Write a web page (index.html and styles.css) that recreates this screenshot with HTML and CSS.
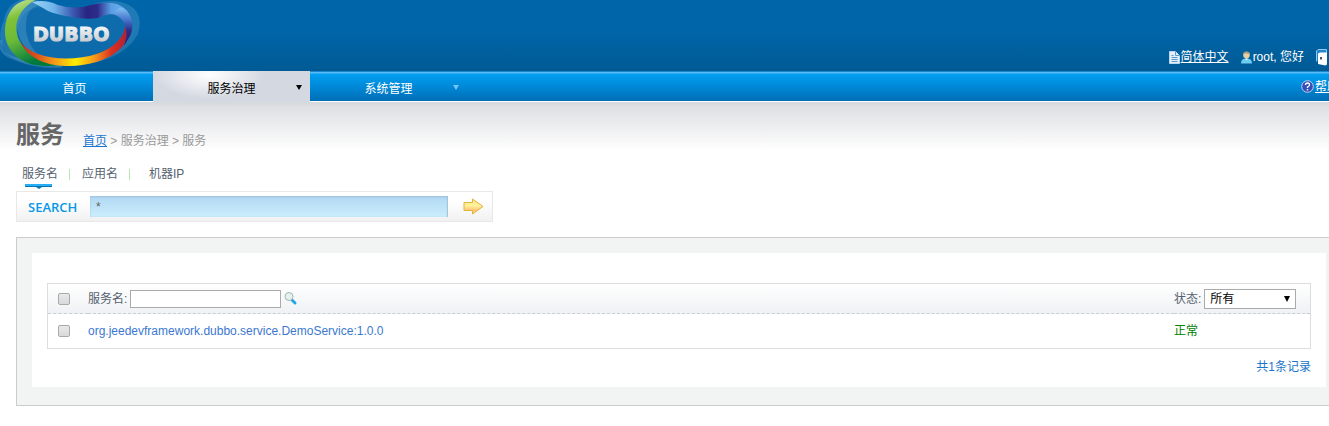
FILE: index.html
```html
<!DOCTYPE html>
<html lang="zh-CN">
<head>
<meta charset="utf-8">
<title>Dubbo 服务治理</title>
<link rel="stylesheet" href="styles.css">
</head>
<body>
<div class="page">
  <header class="header">
    <svg class="logo" width="142" height="71" viewBox="0 0 142 71" role="img" aria-label="DUBBO">
      <defs>
        <linearGradient id="green" x1="0" y1="0" x2=".35" y2="1">
          <stop offset="0" stop-color="#d6ecc4"/><stop offset=".3" stop-color="#80c238"/><stop offset=".6" stop-color="#6cba38"/><stop offset="1" stop-color="#007a3d"/>
        </linearGradient>
        <linearGradient id="top" x1="0" y1="0" x2="1" y2="0">
          <stop offset="0" stop-color="#9ad4f5"/><stop offset=".22" stop-color="#6fb4ea"/><stop offset=".42" stop-color="#3a56b0"/><stop offset=".55" stop-color="#2a2580"/><stop offset=".66" stop-color="#2c2c88"/><stop offset=".8" stop-color="#5a9fe4"/><stop offset="1" stop-color="#79baf2"/>
        </linearGradient>
        <linearGradient id="bottom" x1="0" y1="0" x2="1" y2="0">
          <stop offset="0" stop-color="#b83024"/><stop offset=".15" stop-color="#d8501c"/><stop offset=".3" stop-color="#f2901a"/><stop offset=".52" stop-color="#ffee00"/><stop offset=".7" stop-color="#f5981c"/><stop offset=".86" stop-color="#d9301e"/><stop offset="1" stop-color="#b02038"/>
        </linearGradient>
        <linearGradient id="side" x1="0" y1="0" x2="0" y2="1">
          <stop offset="0" stop-color="#7dbdf4"/><stop offset=".35" stop-color="#3f6cc4"/><stop offset=".6" stop-color="#2a2c86"/><stop offset="1" stop-color="#33206e"/>
        </linearGradient>
        <linearGradient id="word" x1="0" y1="0" x2="0" y2="1">
          <stop offset="0" stop-color="#ffffff"/><stop offset="1" stop-color="#bfc2c8"/>
        </linearGradient>
      </defs>
      <path d="M4 20Q-5 40 7 54Q26 68 60 66Q120 66 138 34Q146 6 116 1Q98 0 86 8Q55 26 38 0H20Q6 6 4 20Z" fill="#8cc4e4" fill-opacity=".22"/>
      <path d="M1 40Q-2 54 16 59Q38 68 62 66" fill="none" stroke="#7ab5dc" stroke-opacity=".3" stroke-width="3"/>
      <path d="M17 30Q22 3 50 8Q80 22 108 12Q124 12 126 28Q124 50 100 56Q50 64 26 49Q17 42 17 30Z" fill="#0767a9" fill-opacity=".7"/>
      <path d="M27 0Q17 12 17 28Q20 44 30 52L38 55Q22 38 27 16Q31 6 42 4Z" fill="#62a6d2" fill-opacity=".35"/>
      <path d="M33 -1C14 0 5 14 5 32C5 50 20 66 46 66Q54 66 60 65C40 62 24 52 18 38C13 22 20 8 37 -1Z" fill="url(#green)"/>
      <path d="M32 2Q46 -1 58 5Q76 10 91 5Q106 1 117 4Q129 9 131 20Q124 13 114 14Q106 14 98 18Q84 20 66 16Q55 14 48 11Q40 6 32 2Z" fill="url(#top)"/>
      <path d="M112 14Q121 4 127 11Q136 22 130 36L124 46Q127 34 125 26Q122 16 112 14Z" fill="url(#side)"/>
      <path d="M20 42Q34 58 66 58.500Q101 58 117 42Q125 34 125 26Q129 36 123 46C112 58 94 66 66 66Q32 65 20 42Z" fill="url(#bottom)"/>
      <text class="logo-word" x="33" y="41" fill="url(#word)" stroke="url(#word)">DUBBO</text>
    </svg>
    <div class="userbar">
      <a class="user-item linked" href="#">
        <svg width="11" height="13" viewBox="0 0 11 13"><path d="M.5.5h6l4 4v8H.5z" fill="#e4f1fb" stroke="#b9d7ee"/><path d="M6.500.5v4h4" fill="none" stroke="#5c99c8"/><path d="M2.500 4.500h2M2.500 6.500h6M2.500 8.500h6M2.500 10.500h6" stroke="#5a95c6"/></svg>
        <span>简体中文</span></a>
      <span class="user-item">
        <svg width="11" height="13" viewBox="0 0 11 13"><path d="M0 12.500Q0 8 4 7.500H7Q11 8 11 12.500Z" fill="#6ccdf0"/><circle cx="5.500" cy="4" r="3.300" fill="#e8d0a4"/><path d="M2.200 4Q2 .5 5.500.5T8.800 4L7 2.500H4Z" fill="#a89c80"/><path d="M4 7.500l1.500 2L7 7.500z" fill="#fff"/></svg>
        <span>root, 您好</span></span>
      <a class="user-item linked" href="#">
        <svg width="12" height="17" viewBox="0 0 12 17"><path d="M.5 12.500V2L2 .5H10.500V4" fill="#1f86cf" stroke="#8fcaf4"/><path d="M2 4.500L4 3.500H11V15.500L9.500 16.500L2 15Z" fill="#fff"/><path d="M4 8h2v2.500h-2z" fill="#3f5368"/></svg>
        <span>退出</span></a>
    </div>
  </header>

  <nav class="nav">
    <a class="tab home" href="#">首页</a>
    <a class="tab active" href="#">服务治理<i class="caret"></i></a>
    <a class="tab" href="#">系统管理<i class="caret"></i></a>
    <a class="help" href="#">
      <svg width="13" height="13" viewBox="0 0 13 13"><circle cx="6.500" cy="6.500" r="5.800" fill="#3450b8" stroke="#c4cdf0"/><path d="M4.500 5Q4.500 3 6.500 3T8.500 5Q8.500 6 6.500 7V8" fill="none" stroke="#fff" stroke-width="1.300"/><path d="M5.800 9h1.400v1.400H5.800z" fill="#fff"/></svg>
      <span>帮助</span></a>
  </nav>

  <main class="content">
    <div class="heading">
      <h1>服务</h1>
      <div class="crumbs"><a href="#">首页</a> &gt; 服务治理 &gt; 服务</div>
    </div>
    <div class="kinds">
      <a class="kind current" href="#">服务名</a>
      <a class="kind" href="#">应用名</a>
      <a class="kind" href="#">机器IP</a>
    </div>
    <form class="search">
      <label for="keyword">SEARCH</label>
      <input id="keyword" class="keyword" type="text" value="*">
      <button class="go" type="button" aria-label="搜索">
        <svg width="21" height="17" viewBox="0 0 21 17"><defs><linearGradient id="gold" x1="0" y1="0" x2="0" y2="1"><stop offset="0" stop-color="#ffe98a"/><stop offset=".45" stop-color="#fff19a"/><stop offset=".75" stop-color="#ffc37a"/><stop offset="1" stop-color="#ffe070"/></linearGradient></defs><path d="M1 4.500H9.500V1L20 8.500L9.500 16V12.500H1Z" fill="url(#gold)" stroke="#e0b43c" stroke-linejoin="round"/></svg>
      </button>
    </form>

    <section class="panel">
      <div class="sheet">
        <table class="services">
          <thead>
            <tr>
              <th class="pick"><input class="check" type="checkbox" aria-label="全选"></th>
              <th>
                <div class="filter">
                  <label for="name">服务名:</label>
                  <input id="name" class="name" type="text">
                  <svg width="14" height="14" viewBox="0 0 14 14"><path d="M8 8l3 3" stroke="#25a8e8" stroke-width="3" stroke-linecap="round"/><circle cx="5" cy="4.500" r="4" fill="#e4f2ef" stroke="#a4b5b3"/></svg>
                </div>
              </th>
              <th class="state">
                <div class="filter">
                  <label for="state">状态:</label>
                  <span class="picker"><select id="state"><option>所有</option></select></span>
                </div>
              </th>
            </tr>
          </thead>
          <tbody>
            <tr>
              <td class="pick"><input class="check" type="checkbox" aria-label="选择服务"></td>
              <td><a href="#">org.jeedevframework.dubbo.service.DemoService:1.0.0</a></td>
              <td class="state normal">正常</td>
            </tr>
          </tbody>
        </table>
        <p class="total">共1条记录</p>
      </div>
    </section>
  </main>
</div>
</body>
</html>
```
FILE: styles.css
```css
* { box-sizing: border-box; }
body {
  margin: 0;
  background: #fff;
  color: #556270;
  font: 12px/16px "Liberation Sans", "Noto Sans CJK SC", sans-serif;
}
svg { display: block; flex: none; }
.page { overflow: hidden; }

.header {
  display: flex;
  justify-content: space-between;
  height: 71px;
  background: linear-gradient(#0066a9 40%, #005a94);
}
.logo-word { font: bold 19px "DejaVu Sans", sans-serif; stroke-width: 1px; }
.userbar {
  display: flex;
  gap: 12px;
  height: 20px;
  margin: 47px -24px 0 0;
  color: #fff;
  white-space: nowrap;
}
.user-item { display: flex; align-items: center; gap: 1px; color: #fff; text-decoration: none; }
.linked span, .help span { text-decoration: underline; }

.nav {
  display: flex;
  height: 31px;
  border-top: 1px solid #1a86cb;
  border-bottom: 1px solid #fff;
  background: linear-gradient(#5abcf5 0, #5abcf5 1px, #009ff3 2px, #006eb6);
}
.tab {
  position: relative;
  width: 157px;
  padding-top: 9px;
  color: #fff;
  text-align: center;
  text-decoration: none;
}
.tab.home { width: 153px; padding-right: 4px; }
.tab.active {
  margin: -1px 0;
  padding-top: 10px;
  color: #000;
  background: radial-gradient(ellipse 56px 24px at 56px 4px, #fff, transparent), #d3d8e1;
}
.caret {
  position: absolute;
  right: 8px;
  top: 13px;
  border: 3px solid transparent;
  border-top: 5px solid #70c8fa;
  border-bottom: 0;
}
.active .caret { top: 14px; border-top-color: #000; }
.help {
  display: flex;
  align-items: center;
  gap: 1px;
  margin: 0 -10px 0 auto;
  color: #fff;
  white-space: nowrap;
}

.content {
  padding: 16px 0 20px 16px;
  background: linear-gradient(#d4d9dc, #dfe0e3 5px, #fff 49px);
}
.heading { display: flex; align-items: flex-end; gap: 19px; padding-top: 1px; }
h1 { margin: 0; color: #666; font-size: 24px; line-height: 32px; }
.crumbs { padding-bottom: 2px; color: #999; }
.crumbs a { color: #1b75d0; }

.kinds { display: flex; margin-top: 15px; padding-left: 6px; }
.kind {
  position: relative;
  height: 25px;
  color: #556270;
  text-decoration: none;
}
.kind + .kind {
  margin-left: 11px;
  padding-left: 13px;
  background: linear-gradient(#b6e6b4, #b6e6b4) 0 3px / 1px 11px no-repeat;
}
.kind:last-child { padding-left: 20px; }
.current::before {
  content: "";
  position: absolute;
  left: 3px;
  top: 18px;
  width: 27px;
  height: 3px;
  background: linear-gradient(#27aef4 2px, #0874b2 2px);
}
.current::after {
  content: "";
  position: absolute;
  left: 14px;
  top: 21px;
  border: 3px solid transparent;
  border-top: 2px solid #0874b2;
  border-bottom: 0;
}

.search {
  display: flex;
  align-items: center;
  width: 477px;
  height: 31px;
  padding-left: 11px;
  border: 1px solid #e8e8e8;
  background: linear-gradient(#fff 30%, #f1f1f1);
}
.search label { width: 62px; color: #0898e8; font: 600 13px/16px "Open Sans", sans-serif; }
.keyword {
  width: 358px;
  height: 21px;
  padding: 0 6px;
  border: 0;
  background: linear-gradient(#b1d8f3, #cbeefd);
  box-shadow: inset 0 1px 2px #9cc3de, inset -1px 0 1px #9cc8da;
  color: #666;
  font: 12px "Liberation Sans", sans-serif;
}
.go { margin-left: 15px; padding: 0; border: 0; background: none; }

.panel {
  margin: 15px -13px 0 0;
  padding: 15px 15px 18px;
  border: 1px solid #ccc;
  background: #f2f4f4;
}
.sheet { padding: 30px 15px 12px; background: #fff; }
.services { width: 100%; border: 1px solid #ddd; border-spacing: 0; }
th, td { padding: 0; font-weight: normal; text-align: left; }
th { height: 30px; border-bottom: 1px dashed #c9ced3; }
td { height: 34px; }
thead { background: linear-gradient(#fff, #f0f1f4); }
.pick { width: 40px; padding-left: 10px; }
.state { width: 136px; }
.services a { color: #3b78d0; text-decoration: none; }
.services .normal { color: #008000; }
.check {
  display: block;
  appearance: none;
  width: 12px;
  height: 12px;
  margin: 0;
  border: 1px solid #aaa;
  border-radius: 2px;
  background: linear-gradient(#e8e8e8, #d9d9d9);
}
.filter { display: flex; align-items: center; gap: 3px; }
.name { width: 151px; height: 18px; padding: 0 2px; border: 1px solid #aaa; }
.picker { position: relative; }
.picker::after {
  content: "";
  position: absolute;
  right: 6px;
  top: 7px;
  border: 3px solid transparent;
  border-top: 6px solid #000;
  border-bottom: 0;
  pointer-events: none;
}
.picker select {
  display: block;
  appearance: none;
  width: 92px;
  height: 20px;
  padding: 0 5px;
  border: 1px solid #aaa;
  border-radius: 0;
  background: #fff;
  color: #000;
  font: 12px "Liberation Sans", "Noto Sans CJK SC", sans-serif;
}
.total { margin: 10px 0 0; color: #1b75c8; text-align: right; }
```
